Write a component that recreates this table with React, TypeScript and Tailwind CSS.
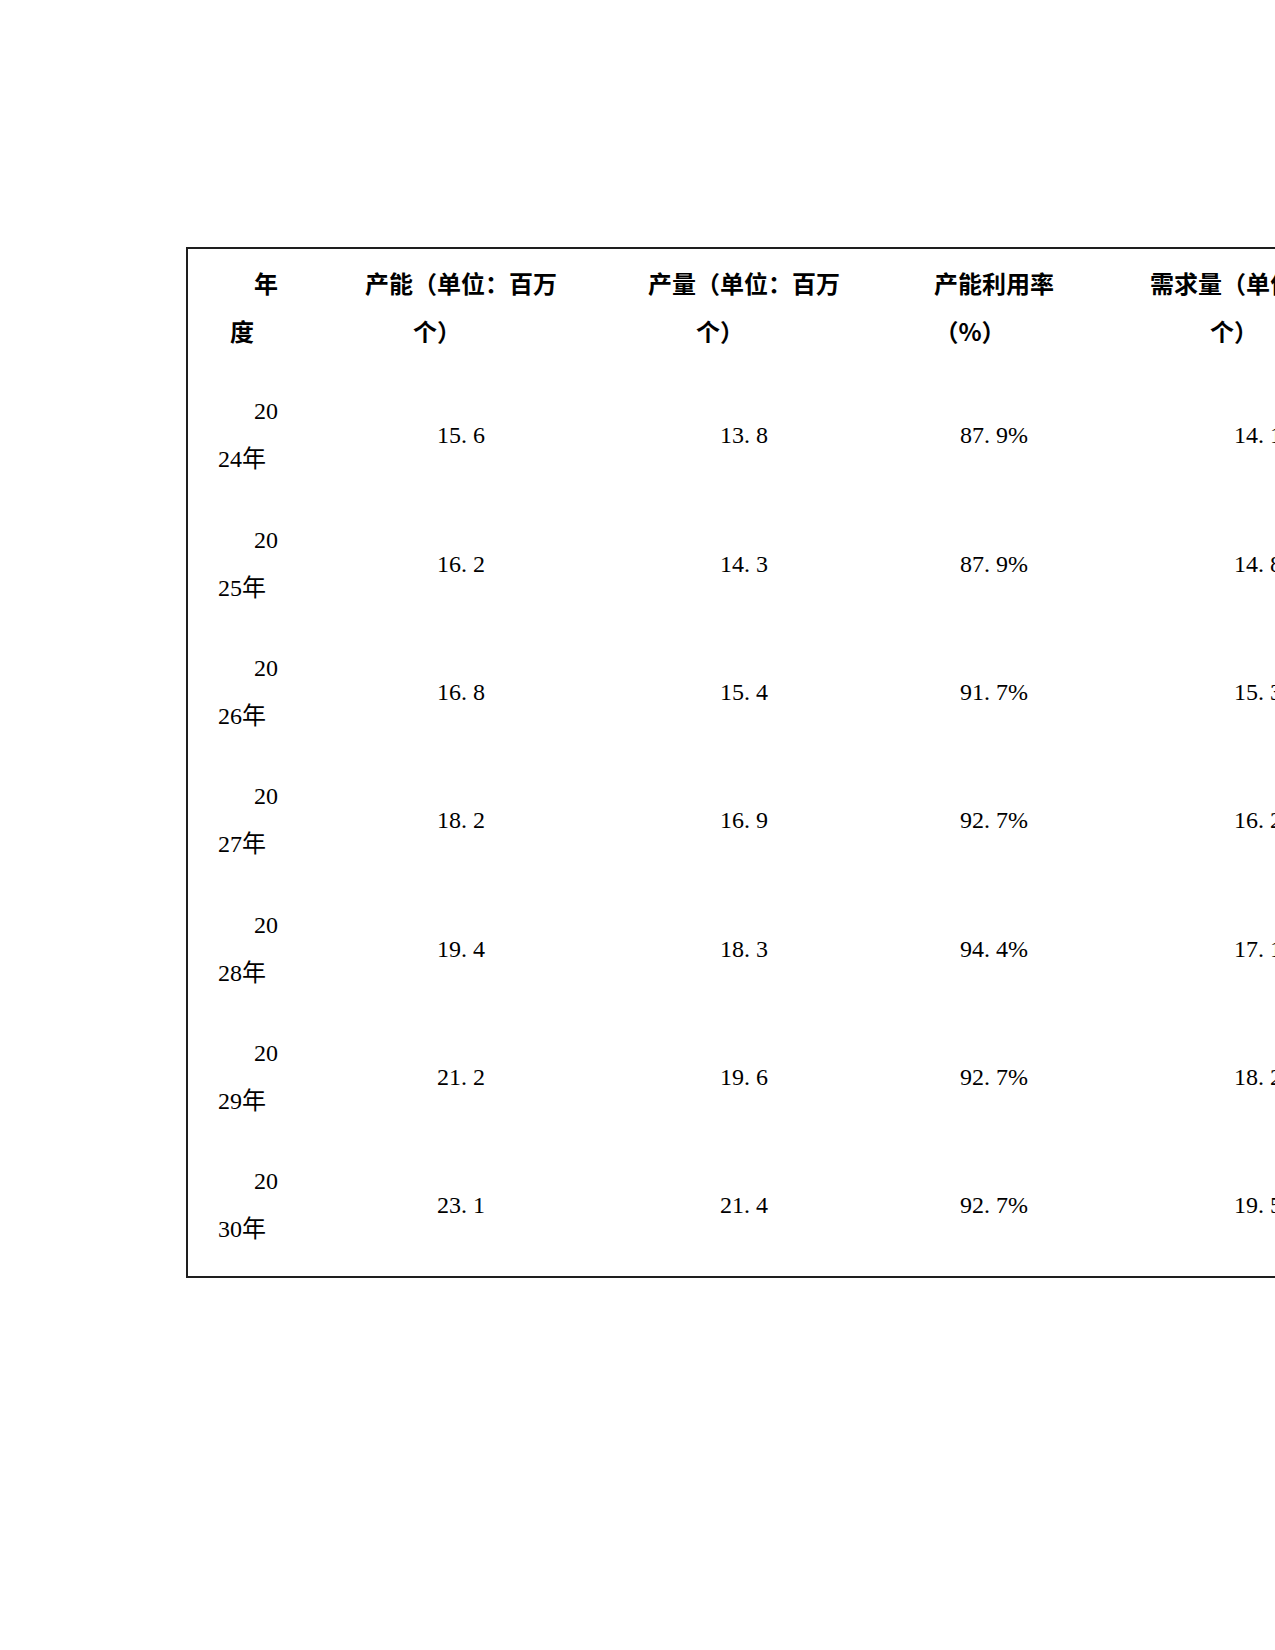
const HEADERS = [
  '年度',
  '产能（单位：百万个）',
  '产量（单位：百万个）',
  '产能利用率（%）',
  '需求量（单位：百万个）'
];

const ROWS = [
  ['2024年', '15.6', '13.8', '87.9%', '14.1'],
  ['2025年', '16.2', '14.3', '87.9%', '14.8'],
  ['2026年', '16.8', '15.4', '91.7%', '15.3'],
  ['2027年', '18.2', '16.9', '92.7%', '16.2'],
  ['2028年', '19.4', '18.3', '94.4%', '17.1'],
  ['2029年', '21.2', '19.6', '92.7%', '18.2'],
  ['2030年', '23.1', '21.4', '92.7%', '19.5']
];

// the period in the source font takes a full half-width cell
function Num({ value }: { value: string }) {
  const parts = value.split('.');
  if (parts.length < 2) {
    return <>{value}</>;
  }
  return (
    <>
      {parts[0]}
      <span className="inline-block w-[0.5em] indent-0 text-left">.</span>
      {parts[1]}
    </>
  );
}

const cellClass =
  'pt-[10px] pb-[22px] px-4 text-center align-middle indent-[2em] break-all leading-[48.15px] text-[24px]';

export default function App() {
  return (
    <div className="w-[1275px] h-[1650px] overflow-hidden bg-white text-black">
      <div className="pt-[247px] pl-[186px]">
        <table className="table-fixed w-[1202px] border-separate border-spacing-0 border-2 border-[#1e1e1e]">
          <colgroup>
            <col className="w-[108px]" />
            <col className="w-[282px]" />
            <col className="w-[284px]" />
            <col className="w-[216px]" />
            <col className="w-[312px]" />
          </colgroup>
          <thead>
            <tr>
              {HEADERS.map((h) => (
                <th
                  key={h}
                  className={`${cellClass} font-bold font-['Noto_Sans_CJK_SC',sans-serif]`}
                >
                  {h}
                </th>
              ))}
            </tr>
          </thead>
          <tbody>
            {ROWS.map((row) => (
              <tr key={row[0]}>
                {row.map((v, i) => (
                  <td
                    key={i}
                    className={`${cellClass} font-normal font-['Liberation_Serif','Noto_Sans_CJK_SC',serif]`}
                  >
                    <Num value={v} />
                  </td>
                ))}
              </tr>
            ))}
          </tbody>
        </table>
      </div>
    </div>
  );
}
